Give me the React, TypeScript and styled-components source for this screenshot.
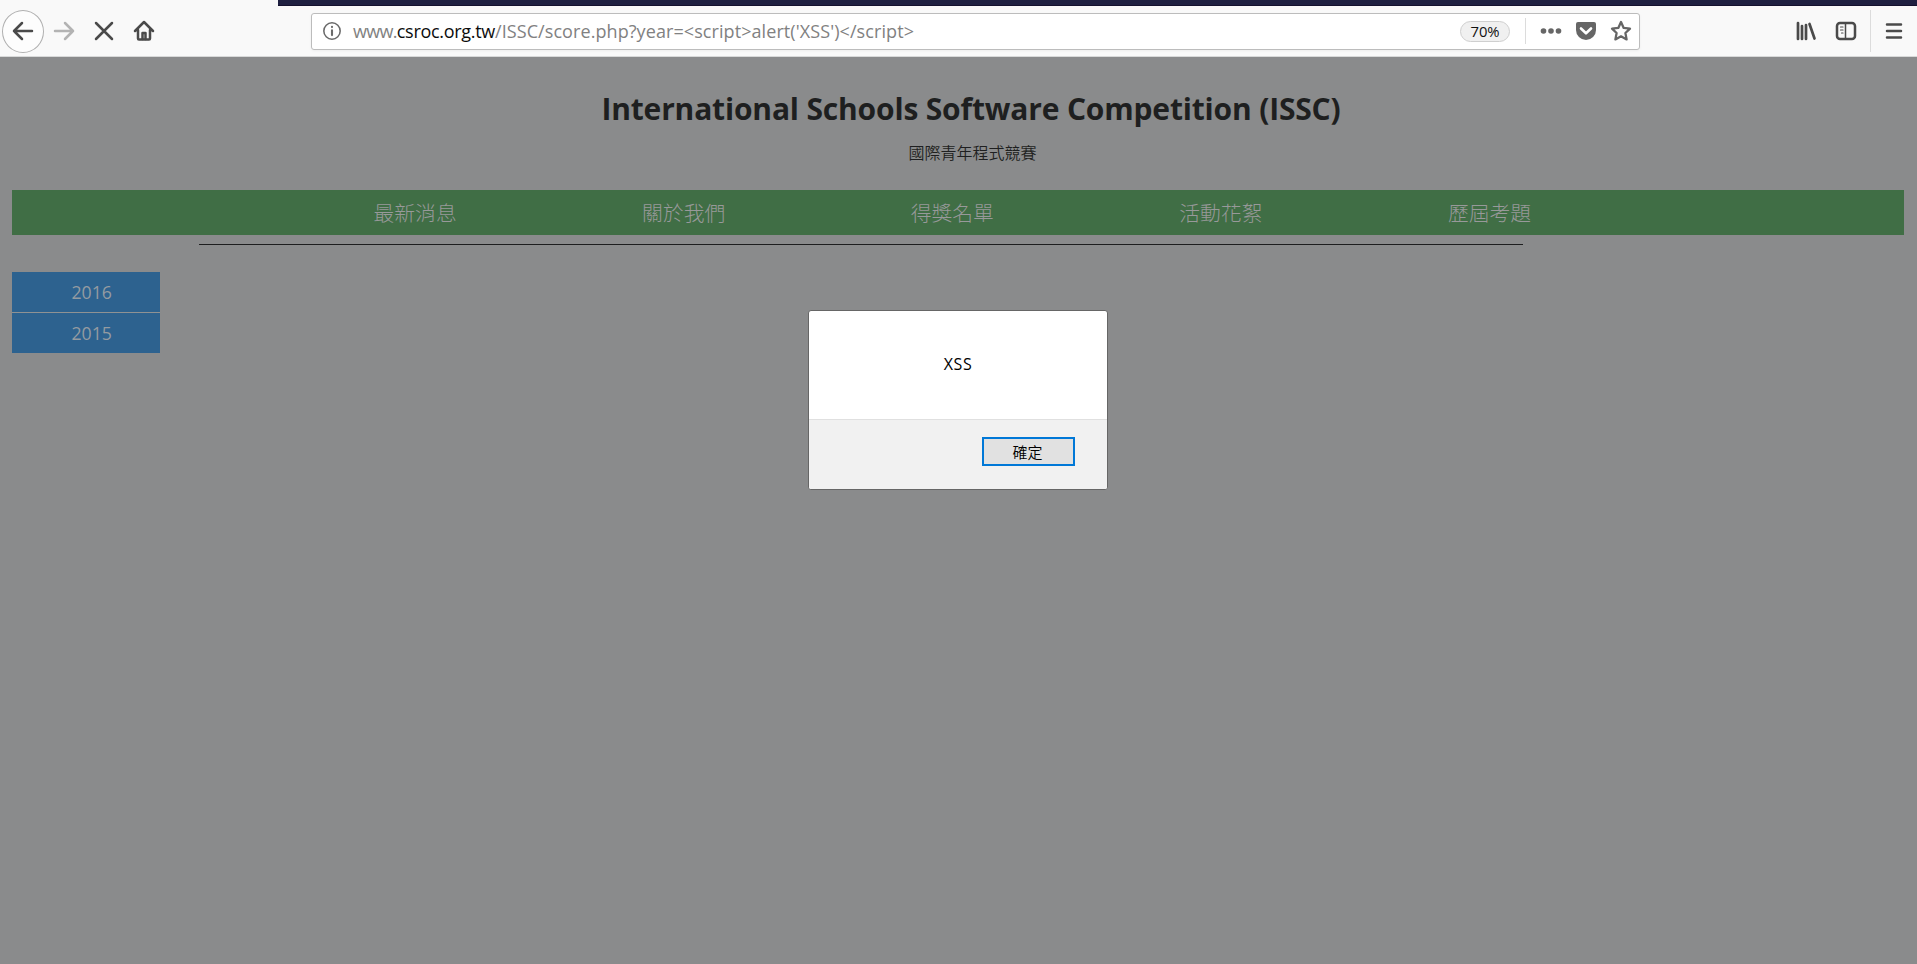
import React from "react";
import styled, { createGlobalStyle, css } from "styled-components";

const Global = createGlobalStyle`
  * { box-sizing: border-box; }
  html, body { margin: 0; height: 100%; overflow: hidden; }
  body { background: #8a8b8c; font-family: "Noto Sans", "Noto Sans CJK TC", sans-serif; }
`;

const Window = styled.div`
  display: flex;
  flex-direction: column;
  height: 964px;
  width: 1917px;
`;

const Chrome = styled.header`
  flex: none;
  height: 57px;
  background: #f9f9f9;
  border-bottom: 1px solid #d8d9d9;
`;

const TabStrip = styled.div`
  height: 6px;
  margin-left: 278px;
  background: #1f2041;
  border-bottom: 1px solid #14112e;
`;

const Toolbar = styled.div`
  display: flex;
  align-items: center;
  height: 50px;
  padding-left: 2px;
`;

const ToolButton = styled.button<{ $w: number; $round?: boolean; $dim?: boolean }>`
  display: flex;
  align-items: center;
  justify-content: center;
  flex: none;
  width: ${(p) => p.$w}px;
  height: 42px;
  padding: 0;
  border: 0;
  background: none;
  color: ${(p) => (p.$dim ? "#b3b3b3" : "#4a4a4a")};
  ${(p) =>
    p.$round &&
    css`
      height: 43px;
      border: 1px solid #b0b0b0;
      border-radius: 50%;
      background: #fdfdfd;
    `}
`;

const UrlBar = styled.div`
  display: flex;
  align-items: center;
  flex: none;
  width: 1329px;
  height: 37px;
  margin-left: 147px;
  padding-left: 10px;
  border: 1px solid #bcbcbc;
  border-radius: 3px;
  background: #fff;
  box-shadow: 0 1px 3px rgba(0, 0, 0, 0.05);
  color: #6a6a6a;
`;

const Url = styled.div`
  flex: 1;
  margin-left: 11px;
  font-family: "Open Sans", "Noto Sans", sans-serif;
  font-size: 18px;
  line-height: 35px;
  color: #818181;
  white-space: nowrap;
`;

const UrlPart = styled.span<{ $track: number; $host?: boolean }>`
  letter-spacing: ${(p) => p.$track}px;
  ${(p) => p.$host && "color: #0c0c0d;"}
`;

const Zoom = styled.span`
  width: 50px;
  height: 21px;
  border: 1px solid #cfcfcf;
  border-radius: 11px;
  background: #f0f0f0;
  font: 14.8px/19px "Open Sans", sans-serif;
  color: #111;
  text-align: center;
`;

const Divider = styled.i<{ $h: number; $gap: number }>`
  width: 1px;
  height: ${(p) => p.$h}px;
  margin-left: ${(p) => p.$gap}px;
  background: #dcdcdc;
`;

const UrlActions = styled.div`
  display: flex;
  align-items: center;
  gap: 13px;
  margin: 0 7px 0 14px;
  color: #666;
`;

const RightTools = styled.div`
  display: flex;
  align-items: center;
  margin-left: 146px;
`;

const Page = styled.main`
  flex: 1;
  padding: 0 13px 0 12px;
  background: #8a8b8c;
`;

const Title = styled.h1`
  margin: 0 0 0 26px;
  padding-top: 31px;
  font: 700 30px/42px "Open Sans", "Noto Sans", sans-serif;
  letter-spacing: -0.17px;
  color: #1e1f20;
  text-align: center;
`;

const Subtitle = styled.p`
  margin: 10px 0 0 29px;
  height: 50px;
  font: 350 16px/24px "Noto Sans CJK TC", sans-serif;
  color: #1e1f20;
  text-align: center;
`;

const Nav = styled.nav`
  display: flex;
  height: 45px;
  padding-left: 361.5px;
  background: #406e45;
`;

const NavItem = styled.a`
  width: 268.6px;
  font: 300 20.8px/45px "Noto Sans CJK TC", sans-serif;
  color: #98999a;
`;

const Rule = styled.hr`
  width: 1324px;
  height: 1px;
  margin: 9px 0 27px 187px;
  border: 0;
  background: #1d1e1f;
`;

const Years = styled.ul`
  display: flex;
  flex-direction: column;
  gap: 1px;
  width: 148px;
  margin: 0;
  padding: 0;
  list-style: none;
  background: #8f9293;
`;

const Year = styled.li`
  height: 40px;
  padding-left: 59.5px;
  background: #2d628f;
  font: 400 17.7px/40px "Open Sans", "Noto Sans", sans-serif;
  color: #949ba1;
`;

const Dialog = styled.section`
  position: absolute;
  left: 808px;
  top: 310px;
  display: flex;
  flex-direction: column;
  width: 300px;
  height: 180px;
  border: 1px solid #666;
  border-radius: 3px;
  background: #fff;
  overflow: hidden;
`;

const Message = styled.p`
  flex: 1;
  margin: 0;
  padding-top: 41px;
  font: 16px/24px "Open Sans", sans-serif;
  letter-spacing: 0.6px;
  color: #000;
  text-align: center;
`;

const Footer = styled.footer`
  display: flex;
  justify-content: flex-end;
  height: 70px;
  padding: 17px 32px 0 0;
  border-top: 1px solid #e0e0e0;
  background: #f1f1f1;
`;

const OkButton = styled.button`
  width: 93px;
  height: 29px;
  padding: 0 2px 1px 0;
  border: 2px solid #0078d7;
  background: #e1e1e1;
  font: 350 15px/23px "Noto Sans CJK TC", sans-serif;
  color: #000;
`;

const Icon = ({ size = 22, w = 2.5, children }: { size?: number; w?: number; children: React.ReactNode }) => (
  <svg width={size} height={size} viewBox="0 0 22 22" fill="none" stroke="currentColor" strokeWidth={w} strokeLinecap="round" strokeLinejoin="round">
    {children}
  </svg>
);

const nav = ["最新消息", "關於我們", "得獎名單", "活動花絮", "歷屆考題"];
const years = ["2016", "2015"];

export default function App() {
  return (
    <Window>
      <Global />
      <Chrome>
        <TabStrip />
        <Toolbar>
          <ToolButton $w={42} $round aria-label="Back">
            <Icon><path d="M20 11H2M10 3L2 11l8 8" /></Icon>
          </ToolButton>
          <ToolButton $w={40} $dim aria-label="Forward">
            <Icon><path d="M2 11h18M12 3l8 8-8 8" /></Icon>
          </ToolButton>
          <ToolButton $w={40} aria-label="Stop">
            <Icon><path d="M3 3l16 16M19 3L3 19" /></Icon>
          </ToolButton>
          <ToolButton $w={40} aria-label="Home">
            <Icon>
              <path d="M2 11L11 2l9 9M5 10v8.5q0 1 1 1h10q1 0 1-1V10" />
              <path d="M9.5 19v-6h3v6" />
            </Icon>
          </ToolButton>
          <UrlBar>
            <Icon size={20} w={1.7}>
              <circle cx="11" cy="11" r="9" />
              <path d="M11 10.2v5.3M11 6.4v.3" strokeWidth={2.3} />
            </Icon>
            <Url>
              <UrlPart $track={-0.7}>www.</UrlPart>
              <UrlPart $track={-0.3} $host>csroc.org.tw</UrlPart>
              <UrlPart $track={0.08}>{"/ISSC/score.php?year=<script>alert('XSS')</script>"}</UrlPart>
            </Url>
            <Zoom>70%</Zoom>
            <Divider $h={26} $gap={15} />
            <UrlActions>
              <Icon>
                <g fill="currentColor" stroke="none">
                  <circle cx="3.5" cy="11" r="2.8" />
                  <circle cx="11" cy="11" r="2.8" />
                  <circle cx="18.5" cy="11" r="2.8" />
                </g>
              </Icon>
              <Icon>
                <path d="M3 2h16q2 0 2 2v6a10 10 0 0 1-20 0V4q0-2 2-2z" fill="currentColor" stroke="none" />
                <path d="M6 8.5l5 4.8 5-4.8" stroke="#fff" strokeWidth={2.6} />
              </Icon>
              <Icon w={2.3}>
                <path d="M11 2l2.7 5.9 6.3.8-4.6 4.3 1.2 6.4L11 16.3l-5.6 3.1L6.6 13 2 8.7l6.3-.8z" />
              </Icon>
            </UrlActions>
          </UrlBar>
          <RightTools>
            <ToolButton $w={40} aria-label="Library">
              <Icon><path d="M3 3v16M7 6v13M11 5v14M14.5 4l5 14.5" strokeWidth={2.7} /></Icon>
            </ToolButton>
            <ToolButton $w={40} aria-label="Sidebar">
              <Icon>
                <rect x="2" y="3" width="18" height="16" rx="3" />
                <path d="M10.5 3v16" strokeWidth={1.5} />
                <path d="M5.5 7h2.5M5.5 10h2.5M6.5 13h1.5" strokeWidth={1.2} />
              </Icon>
            </ToolButton>
            <Divider $h={42} $gap={4} />
            <ToolButton $w={46} aria-label="Menu">
              <Icon><path d="M4 4.5h14M4 11h14M4 17.500h14" /></Icon>
            </ToolButton>
          </RightTools>
        </Toolbar>
      </Chrome>
      <Page>
        <Title>International Schools Software Competition (ISSC)</Title>
        <Subtitle>國際青年程式競賽</Subtitle>
        <Nav>
          {nav.map((n) => (
            <NavItem key={n}>{n}</NavItem>
          ))}
        </Nav>
        <Rule />
        <Years>
          {years.map((y) => (
            <Year key={y}>{y}</Year>
          ))}
        </Years>
      </Page>
      <Dialog role="alertdialog">
        <Message>XSS</Message>
        <Footer>
          <OkButton>確定</OkButton>
        </Footer>
      </Dialog>
    </Window>
  );
}
